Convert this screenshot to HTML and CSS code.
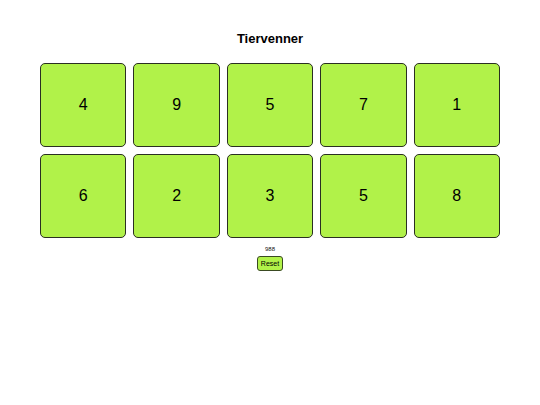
FILE: index.html
```html
<!DOCTYPE html>
<html>
<head>
<meta charset="utf-8">
<link rel="stylesheet" href="styles.css">
</head>
<body>
<div class="app">
  <h1 class="title">Tiervenner</h1>
  <div class="grid">
    <div class="tile">4</div>
    <div class="tile">9</div>
    <div class="tile">5</div>
    <div class="tile">7</div>
    <div class="tile">1</div>
    <div class="tile">6</div>
    <div class="tile">2</div>
    <div class="tile">3</div>
    <div class="tile">5</div>
    <div class="tile">8</div>
  </div>
  <div class="count">988</div>
  <button class="reset">Reset</button>
</div>
</body>
</html>
```
FILE: styles.css
```css
html, body {
  margin: 0;
  padding: 0;
  background: #ffffff;
}
.app {
  font-family: "Liberation Sans", Arial, sans-serif;
  display: flex;
  flex-direction: column;
  align-items: center;
  padding-top: 31px;
  color: #000;
}
.title {
  margin: 0;
  font-size: 13px;
  line-height: 16px;
  font-weight: bold;
}
.grid {
  margin-top: 16px;
  width: 460px;
  display: grid;
  grid-template-columns: repeat(5, 1fr);
  grid-auto-rows: 84px;
  gap: 7px;
}
.tile {
  box-sizing: border-box;
  background: #b1f249;
  border: 1px solid #2a2f22;
  border-radius: 5px;
  display: flex;
  align-items: center;
  justify-content: center;
  font-size: 16px;
}
.count {
  margin-top: 7px;
  font-size: 6px;
  line-height: 8px;
  color: #111;
}
.reset {
  margin-top: 3px;
  box-sizing: border-box;
  width: 26px;
  height: 15px;
  padding: 0;
  font-family: "Liberation Sans", Arial, sans-serif;
  font-size: 7px;
  background: #b1f249;
  border: 1px solid #3a4a22;
  border-radius: 3px;
  color: #000;
}
```
